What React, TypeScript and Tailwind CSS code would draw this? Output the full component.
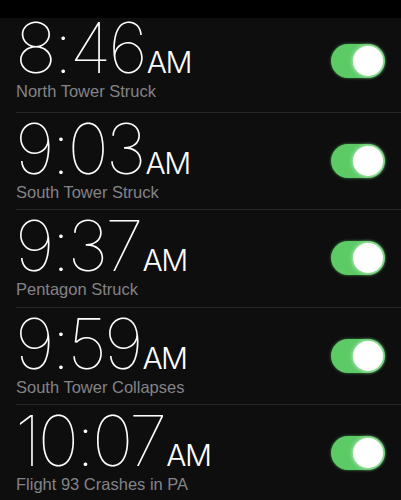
const alarms = [
  { time: "8:46", label: "North Tower Struck", h: "h-[95px]", pt: "-mt-[5px]", tg: "mt-[26px]" },
  { time: "9:03", label: "South Tower Struck", h: "h-[97px]", pt: "pt-[1px]", tg: "mt-[31px]" },
  { time: "9:37", label: "Pentagon Struck", h: "h-[98px]", pt: "pt-[1px]", tg: "mt-[31px]" },
  { time: "9:59", label: "South Tower Collapses", h: "h-[97px]", pt: "pt-[1px]", tg: "mt-[31px]" },
  { time: "10:07", label: "Flight 93 Crashes in PA", h: "h-[97px]", pt: "pt-[1px]", tg: "mt-[31px]" },
];

function Toggle({ className }: { className: string }) {
  return (
    <div className={`w-[54px] h-[34px] rounded-full bg-[#5ccb66] flex items-center justify-end pr-[2px] shadow-[0_0_3px_#3f8f45] ${className}`}>
      <div className="w-[30px] h-[30px] rounded-full bg-white shadow-[0_0_4px_rgba(255,255,255,0.8)]" />
    </div>
  );
}

export default function App() {
  return (
    <div className="w-[401px] h-[500px] overflow-hidden bg-[#0e0e0f] font-['Inter','Liberation_Sans',sans-serif]">
      <div className="relative z-10 h-[18px] bg-black" />
      {alarms.map((a, i) => (
        <div key={a.time} className="pl-4">
          <div className={`${a.h} flex items-start pr-4 ${i < alarms.length - 1 ? "border-b border-[#262628]" : ""}`}>
            <div className={`flex-1 ${a.pt}`}>
              <div className="flex items-baseline text-white leading-none">
                <span className="text-[70px] font-thin tracking-[-3px] -ml-[1px]">{a.time}</span>
                <span className="text-[30px] font-light tracking-[-1.5px] ml-[2px]">AM</span>
              </div>
              <div className="text-[16.5px] text-[#838387] leading-none font-['Liberation_Sans',sans-serif]">{a.label}</div>
            </div>
            <Toggle className={a.tg} />
          </div>
        </div>
      ))}
    </div>
  );
}
